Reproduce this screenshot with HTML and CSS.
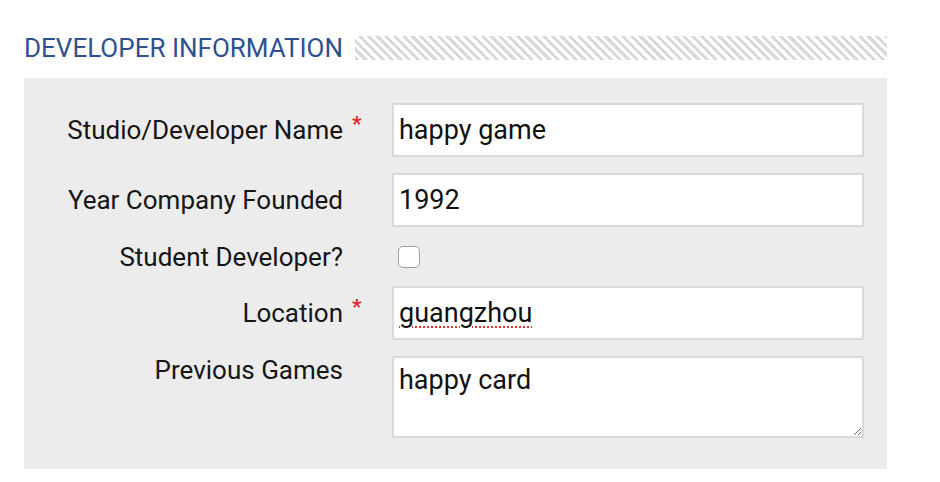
FILE: index.html
```html
<!DOCTYPE html>
<html lang="en">
  <head>
    <meta charset="UTF-8" />
    <meta name="viewport" content="width=device-width, initial-scale=1.0" />
    <title>Developer Information</title>
    <link rel="stylesheet" href="styles.css">
  </head>
  <body>
    <section class="section">
      <!-- Section heading with striped rule -->
      <div class="section-head">
        <h2 class="section-title">DEVELOPER INFORMATION</h2>
        <div class="stripes"></div>
      </div>

      <!-- Form panel -->
      <form class="panel">
        <label class="label" for="studio">Studio/Developer Name</label>
        <span class="req">*</span>
        <input class="field" type="text" id="studio" value="happy game" />

        <label class="label" for="year">Year Company Founded</label>
        <span class="req"></span>
        <input class="field" type="text" id="year" value="1992" />

        <label class="label" for="student">Student Developer?</label>
        <span class="req"></span>
        <div class="check-cell"><input class="check" type="checkbox" id="student" /></div>

        <label class="label" for="location">Location</label>
        <span class="req">*</span>
        <input class="field misspelled" type="text" id="location" value="guangzhou" spellcheck="false" />

        <label class="label label-top" for="games">Previous Games</label>
        <span class="req"></span>
        <textarea class="field area" id="games">happy card</textarea>
      </form>
    </section>
  </body>
</html>
```

FILE: styles.css
```css
/* Global Styles */
body {
  margin: 0;
  background: white;
  font-family: Roboto, "Liberation Sans", sans-serif;
  color: #1a1a1a;
}

.section {
  padding: 36px 0 0 24px;
  width: 863px;
}

/* Heading */
.section-head {
  display: flex;
  align-items: center;
  gap: 12px;
  height: 24px;
}

.section-title {
  margin: 0;
  font-size: 26px;
  font-weight: 400;
  color: #2f5190;
  white-space: nowrap;
  line-height: 24px;
}

.stripes {
  flex: 1;
  height: 24px;
  background: repeating-linear-gradient(45deg, #d9d9d9 0 3px, white 3px 6.2px);
}

/* Panel */
.panel {
  margin-top: 18px;
  background-color: #ececec;
  padding: 25px 23px 31px 0;
  display: grid;
  grid-template-columns: 319px 49px 472px;
  row-gap: 16px;
}

.label {
  font-size: 26px;
  line-height: 26px;
  text-align: right;
  align-self: center;
  color: #161616;
}

.label-top {
  align-self: start;
  padding-top: 1px;
}

.req {
  color: #e0242a;
  font-size: 21px;
  line-height: 20px;
  font-weight: 700;
  padding-left: 9px;
  align-self: center;
  margin-top: -12px;
}

.field {
  box-sizing: border-box;
  width: 472px;
  height: 54px;
  margin: 0;
  padding: 0 5px;
  border: 2px solid #dadada;
  background: white;
  font-family: Roboto, "Liberation Sans", sans-serif;
  font-size: 27px;
  color: #111;
  outline: none;
}

.misspelled {
  text-decoration: underline dotted #e53030;
  text-decoration-thickness: 2px;
  text-underline-offset: 4px;
}

.area {
  height: 82px;
  padding: 7px 5px;
  resize: both;
  line-height: 30px;
}

.check-cell {
  height: 27px;
  display: flex;
  align-items: center;
}

.check {
  appearance: none;
  margin: 0 0 0 6px;
  width: 22px;
  height: 22px;
  border: 1px solid #a0a0a0;
  border-radius: 5px;
  background: white;
}
```
